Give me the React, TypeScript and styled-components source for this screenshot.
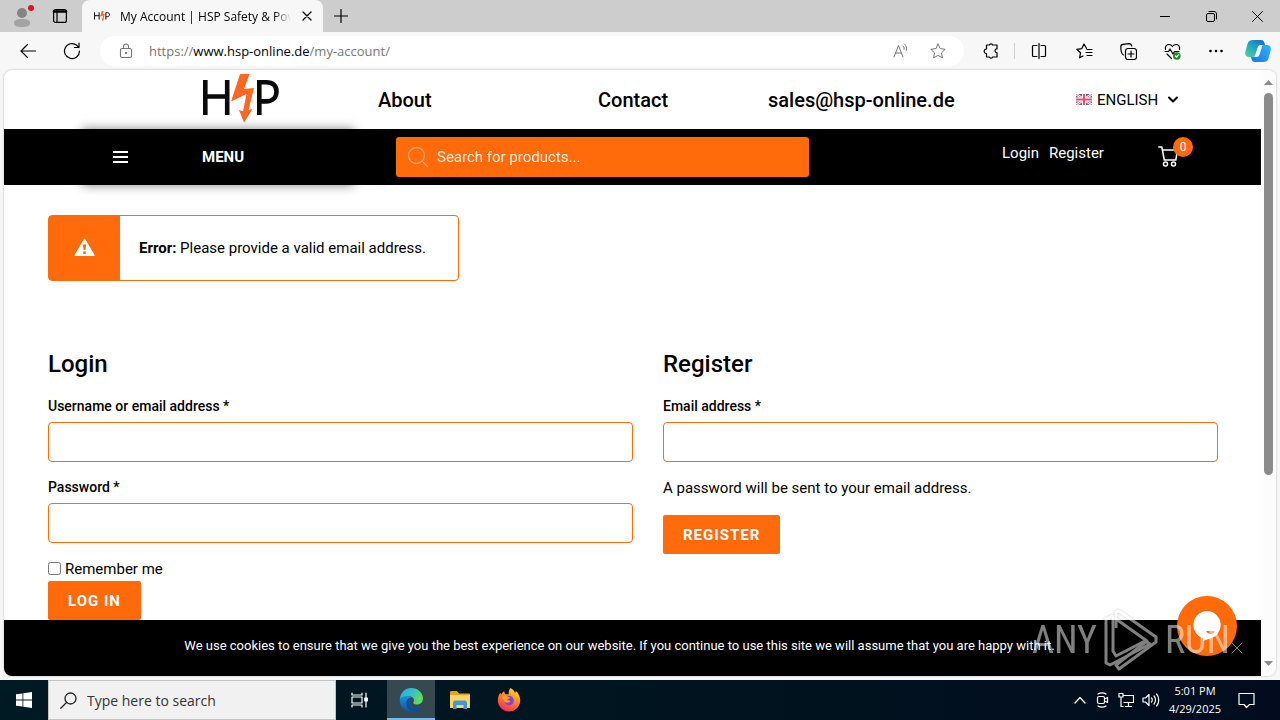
import React from "react";
import styled, { createGlobalStyle, css } from "styled-components";

const ORANGE = "#ff6a0a";
const UI_FONT = '"Open Sans", "Noto Sans", sans-serif';

const Global = createGlobalStyle`
  *, *::before, *::after { box-sizing: border-box; }
  html, body { margin: 0; padding: 0; }
  body { font-family: Roboto, "Liberation Sans", sans-serif; color: #000; background: #f7f7f7; }
  button, input { font: inherit; color: inherit; }
  button { border: 0; padding: 0; background: none; cursor: pointer; }
  a { color: inherit; text-decoration: none; }
  h2, p { margin: 0; }
  svg { display: block; flex: none; }
`;

const Desktop = styled.div`
  display: flex;
  flex-direction: column;
  height: 100vh;
  overflow: hidden;
  background: #f7f7f7;
`;

/* Browser chrome */

const TabStrip = styled.header`
  display: flex;
  flex: none;
  height: 32px;
  background: #cdcdcd;
  font-family: ${UI_FONT};
`;

const TabTools = styled.div`
  display: flex;
  align-items: center;
  gap: 17px;
  width: 82px;
  padding-left: 11px;
`;

const Tab = styled.div`
  display: flex;
  align-items: center;
  gap: 10px;
  width: 241px;
  padding: 0 10px 0 12px;
  background: #f7f7f7;
  border-radius: 8px 8px 0 0;
  font-size: 12px;
`;

const TabTitle = styled.span`
  flex: 1;
  overflow: hidden;
  white-space: nowrap;
  mask-image: linear-gradient(to right, #000 90%, transparent);
`;

const IconButton = styled.button<{ $w?: number }>`
  display: flex;
  flex: none;
  align-items: center;
  justify-content: center;
  width: ${(p) => p.$w ?? 20}px;
  height: 100%;
`;

const WindowButtons = styled.div`
  display: flex;
  margin-left: auto;
`;

const Toolbar = styled.div`
  display: flex;
  flex: none;
  align-items: center;
  height: 38px;
  padding: 0 3px 0 6px;
  font-family: ${UI_FONT};
`;

const AddressBar = styled.div`
  display: flex;
  flex: 1;
  align-items: center;
  height: 30px;
  margin-left: 6px;
  padding: 0 14px 0 18px;
  gap: 15px;
  background: #fff;
  border-radius: 15px;
  color: #767676;
  font-size: 13px;
`;

const Url = styled.span`
  flex: 1;
  white-space: nowrap;
  b { font-weight: 400; color: #000; }
`;

const Divider = styled.span`
  width: 1px;
  height: 16px;
  background: #cfcfcf;
`;

const ToolbarActions = styled.div`
  display: flex;
  align-items: center;
  height: 100%;
  padding-left: 4px;
`;

/* Web page */

const Viewport = styled.div`
  position: relative;
  display: flex;
  flex: 1;
  min-height: 0;
  margin: 0 4px 4px;
  overflow: hidden;
  background: #fff;
  border-radius: 8px;
  box-shadow: 0 0 2px rgba(0, 0, 0, 0.3);
`;

const Page = styled.div`
  flex: 1;
  min-width: 0;
  overflow: hidden;
`;

const Scrollbar = styled.div`
  display: flex;
  flex: none;
  flex-direction: column;
  align-items: center;
  width: 15px;
  padding: 10px 0 10px;
  background: #fcfcfc;
`;

const Thumb = styled.div`
  width: 9px;
  height: 382px;
  margin: 8px 0 auto;
  background: #8b8b8b;
  border-radius: 5px;
`;

const SiteHeader = styled.header`
  display: grid;
  grid-template-columns: 374fr 220fr 170fr 308fr 185fr;
  align-items: center;
  height: 59px;
`;

const LogoLink = styled.a`
  display: flex;
  justify-content: flex-end;
  padding: 0 99px 3px 0;
`;

const HeaderLink = styled.a`
  font-size: 20px;
  font-weight: 500;
  line-height: 24px;
`;

const Language = styled.button`
  display: flex;
  align-items: center;
  gap: 5px;
  font-size: 15px;
  line-height: 20px;
`;

const NavBar = styled.nav`
  position: relative;
  display: grid;
  grid-template-columns: 392fr 413fr 193fr 156fr 103fr;
  height: 56px;
  background: #000;
  color: #fff;
`;

const MenuButton = styled.button`
  display: flex;
  align-items: center;
  gap: 74px;
  margin: 0 42px 0 78px;
  padding-left: 31px;
  background: #000;
  box-shadow: 0 0 10px rgba(0, 0, 0, 0.5);
  font-size: 15px;
  font-weight: 700;
`;

const SearchBox = styled.label`
  display: flex;
  align-items: center;
  gap: 8px;
  height: 40px;
  margin-top: 8px;
  padding: 0 11px;
  background: ${ORANGE};
  border-radius: 3px;
`;

const SearchInput = styled.input`
  flex: 1;
  min-width: 0;
  padding: 0;
  border: 0;
  outline: 0;
  background: none;
  font-size: 15px;
  &::placeholder { color: #fff; opacity: 0.9; }
`;

const AccountLinks = styled.div`
  display: flex;
  grid-column: 4;
  gap: 10px;
  padding-top: 14px;
  font-size: 15px;
  line-height: 20px;
`;

const Cart = styled.a`
  position: relative;
  padding-top: 17px;
`;

const CartCount = styled.span`
  position: absolute;
  top: 8px;
  left: 15px;
  width: 20px;
  height: 20px;
  border-radius: 50%;
  background: ${ORANGE};
  font-size: 12px;
  line-height: 20px;
  text-align: center;
`;

const Content = styled.main`
  padding: 30px 43px 0 44px;
`;

const Alert = styled.div`
  display: flex;
  width: fit-content;
  height: 66px;
  border: 1px solid ${ORANGE};
  border-radius: 4px;
  font-size: 15px;
`;

const AlertIcon = styled.div`
  display: flex;
  align-items: center;
  justify-content: center;
  width: 71px;
  padding-bottom: 2px;
  background: ${ORANGE};
`;

const AlertText = styled.p`
  padding: 0 32px 0 19px;
  line-height: 64px;
  b { font-weight: 700; }
`;

const Forms = styled.div`
  display: grid;
  grid-template-columns: 585fr 555fr;
  gap: 30px;
  margin-top: 68px;
`;

const Form = styled.form`
  display: flex;
  flex-direction: column;
  align-items: flex-start;
`;

const Title = styled.h2`
  margin-bottom: 17px;
  font-size: 24px;
  font-weight: 500;
  line-height: 30px;
`;

const Field = styled.label`
  display: flex;
  flex-direction: column;
  gap: 6px;
  width: 100%;
  margin-bottom: 15px;
  font-size: 14px;
  font-weight: 500;
  line-height: 20px;
`;

const TextInput = styled.input`
  width: 100%;
  height: 40px;
  padding: 0 12px;
  border: 1px solid ${ORANGE};
  border-radius: 4px;
  background: #fff;
`;

const Remember = styled.label`
  display: flex;
  align-items: center;
  gap: 4px;
  font-size: 15px;
  line-height: 23px;
  input { width: 13px; height: 13px; margin: 0 0 3px; }
`;

const Note = styled.p`
  padding-top: 1px;
  margin-bottom: 17px;
  font-size: 15px;
  line-height: 20px;
`;

const Submit = styled.button`
  height: 39px;
  padding: 0 20px;
  border-radius: 2px;
  background: ${ORANGE};
  color: #fff;
  font-size: 15px;
  font-weight: 700;
  letter-spacing: 1px;
`;

const CookieBar = styled.div`
  position: absolute;
  right: 15px;
  bottom: 0;
  left: 0;
  display: flex;
  align-items: center;
  height: 56px;
  padding: 0 18px 0 4px;
  background: #000;
  color: #fff;
  font-size: 13px;
  p { flex: 1; padding-bottom: 5px; text-align: center; }
`;

const ChatButton = styled.button`
  position: absolute;
  right: 39px;
  bottom: 20px;
  display: flex;
  align-items: center;
  justify-content: center;
  width: 60px;
  height: 60px;
  border-radius: 50%;
  background: ${ORANGE};
`;

const Watermark = styled.div`
  position: absolute;
  right: 46px;
  bottom: 4px;
  display: flex;
  align-items: center;
  gap: 6px;
  color: #fff;
  font-family: "Roboto Condensed", "Liberation Sans Narrow", Roboto, sans-serif;
  font-size: 38px;
  line-height: 64px;
  opacity: 0.5;
  pointer-events: none;
  svg { filter: drop-shadow(0 0 1px rgba(0, 0, 0, 0.5)); }
`;

/* Taskbar */

const Taskbar = styled.footer`
  display: flex;
  flex: none;
  height: 40px;
  background: linear-gradient(to right, #001a24, #00141f 50%, #020c1e);
  color: #fff;
  font-family: ${UI_FONT};
`;

const TaskSearch = styled.label`
  display: flex;
  align-items: center;
  gap: 10px;
  width: 288px;
  padding: 0 11px;
  border: 1px solid #c4c4c4;
  background: #f1f1f1;
  color: #222;
`;

const TaskSearchInput = styled.input`
  flex: 1;
  min-width: 0;
  padding: 0;
  border: 0;
  outline: 0;
  background: none;
  font-size: 14px;
  &::placeholder { color: #333; opacity: 1; }
`;

const TaskApps = styled.div`
  display: flex;
  gap: 1px;
  padding-left: 3px;
`;

const TaskButton = styled.button<{ $active?: boolean }>`
  display: flex;
  align-items: center;
  justify-content: center;
  width: 48px;
  ${(p) =>
    p.$active &&
    css`
      background: #364850;
      border-bottom: 2px solid #76b9ed;
      padding-top: 2px;
    `}
`;

const Tray = styled.div`
  display: flex;
  align-items: center;
  gap: 8px;
  margin-left: auto;
  padding-right: 25px;
`;

const Clock = styled.time`
  width: 54px;
  margin-right: 8px;
  font-size: 11px;
  line-height: 18px;
  text-align: center;
  white-space: nowrap;
`;

/* Drawings */

type IconProps = { size?: number; w?: number; h?: number; sw?: number; color?: string; children: React.ReactNode };
const Icon = ({ size = 16, w, h, sw = 1, color = "currentColor", children }: IconProps) => (
  <svg
    width={w ?? size}
    height={h ?? size}
    viewBox={`0 0 ${w ?? size} ${h ?? size}`}
    fill="none"
    stroke={color}
    strokeWidth={sw}
    strokeLinecap="round"
    strokeLinejoin="round"
    aria-hidden="true"
  >
    {children}
  </svg>
);

const HspLogo = ({ width, height }: { width: number; height: number }) => (
  <svg width={width} height={height} viewBox="0 0 76 50" role="img" aria-label="HSP">
    <g fill="none" stroke="#0a0a0a" strokeWidth="4.6">
      <path d="M2.3 7v35M24.2 7v35M2.3 23.500H24.2" />
      <path d="M56.3 42V9.200H63c7.500 0 10.500 4 10.500 9.200 0 6-4 10-10.500 10h-6.700" />
    </g>
    <path fill="#ff6620" d="M37 1h9.500L41 16l10-1-5.500 22 4-1-8.500 13.500L36 37l4 1.300 3.500-17.300L28 28.500z" />
  </svg>
);

const Star = "M8 1l2.200 4.600 5 .7-3.700 3.500.9 5L8 12.400 3.600 14.800l.9-5L.8 6.300l5-.7z";

const Flag = () => (
  <svg width="16" height="11" viewBox="0 0 16 11" opacity="0.85" aria-hidden="true">
    <path fill="#3c4c9c" d="M0 0h16v11H0z" />
    <path stroke="#fff" strokeWidth="2.400" d="M0 0l16 11M16 0L0 11" />
    <path stroke="#e0566a" strokeWidth="1" d="M0 0l16 11M16 0L0 11" />
    <path stroke="#fff" strokeWidth="4" d="M8 0v11M0 5.500h16" />
    <path stroke="#df3348" strokeWidth="2" d="M8 0v11M0 5.500h16" />
  </svg>
);

const Copilot = () => (
  <svg width="26" height="24" viewBox="0 0 26 24" aria-hidden="true">
    <defs>
      <linearGradient id="cpA" x1="0" y1="1" x2="1" y2="0">
        <stop offset="0" stopColor="#58d68a" />
        <stop offset=".5" stopColor="#1ea5c9" />
        <stop offset="1" stopColor="#1563cf" />
      </linearGradient>
      <linearGradient id="cpB" x1="0" y1="1" x2="1" y2="0">
        <stop offset="0" stopColor="#1679e8" />
        <stop offset="1" stopColor="#2fb4f7" />
      </linearGradient>
    </defs>
    <path fill="url(#cpA)" d="M8 1h8c2 0 3 1 3.500 3l.5 2h-4c-2 0-3 1-3.500 3l-2 6c-.6 2-1.500 3-3.500 3H4c-3 0-4.500-2-3.500-6l2-7C3.300 2 5 1 8 1z" />
    <path fill="url(#cpB)" d="M18 23h-8c-2 0-3-1-3.500-3L6 18h2c2 0 3-1 3.500-3l2-6c.6-2 1.500-3 3.500-3h5c3 0 4.500 2 3.500 6l-2 7c-.8 3-2.500 4-5.500 4z" />
    <path fill="#f4fbff" d="M13 8.500c.5-1.700 1.500-2.500 3-2.500h1.500l-3 9.500c-.5 1.700-1.500 2.500-3 2.500H10z" />
  </svg>
);

const EdgeIcon = () => (
  <svg width="24" height="24" viewBox="0 0 24 24" aria-hidden="true">
    <defs>
      <linearGradient id="edA" x1="0" y1="0" x2="1" y2=".4">
        <stop offset="0" stopColor="#2aa8e0" />
        <stop offset=".55" stopColor="#35c1c9" />
        <stop offset="1" stopColor="#62dc59" />
      </linearGradient>
      <linearGradient id="edB" x1="0" y1="0" x2="0" y2="1">
        <stop offset="0" stopColor="#1b93dc" />
        <stop offset="1" stopColor="#0b54a8" />
      </linearGradient>
    </defs>
    <path fill="url(#edB)" d="M1 10c-1.500 8 4.500 14 11.500 14 4.500 0 8-2 10-5-4 2.500-11 1.500-12-4-.4-2.500 1-4 2-5C9.500 6 3 6 1 10z" />
    <path fill="#0a4f9e" d="M8 12c-2 5 1 11 6.500 11.700 3.500-.4 6.300-2 8-4.700-4 2.500-10.500 1.500-12-3.500-.4-2 .5-4 2-5.200C11 9.500 9 10 8 12z" />
    <path fill="url(#edA)" d="M.8 11C1.500 4.500 6 0 12.200 0 19 0 24 5 24 10.500c0 3.500-2.500 6-6 6-3 0-4.300-1-3.600-2.200 1.600-2.300.3-6.300-5.400-6.300C5 8 1.800 9.300.8 11z" />
  </svg>
);

const FolderIcon = () => (
  <svg width="22" height="20" viewBox="0 0 22 20" aria-hidden="true">
    <path fill="#e5a323" d="M1 2.500C1 1.500 1.500 1 2.500 1H8l2 2.500h10c.6 0 1 .4 1 1V7H1z" />
    <path fill="#fcd462" d="M1 5h20v13H1z" />
    <path fill="#3f97d3" d="M4 19v-6c0-1.500 1-2.500 2.500-2.500h9c1.500 0 2.500 1 2.500 2.500v6h-3.500v-4h-7v4z" />
  </svg>
);

const FirefoxIcon = () => (
  <svg width="24" height="24" viewBox="0 0 24 24" aria-hidden="true">
    <defs>
      <linearGradient id="ffA" x1=".8" y1="0" x2=".3" y2="1">
        <stop offset="0" stopColor="#ffe226" />
        <stop offset=".45" stopColor="#ff8a1e" />
        <stop offset="1" stopColor="#f5295c" />
      </linearGradient>
    </defs>
    <path fill="url(#ffA)" d="M13.500 0c3 1.500 4 3.500 4.500 5 .8-.5.8-1.500.7-2.300C21.500 5 23.500 9 23.200 13c-.5 6-5.200 10.500-11.200 10.500S.8 18.500.8 12.500C.8 9 2 6 3.500 4.500c.1 1 .3 1.500.7 2C5 5 6 4 7.300 3.300c0 1.200.4 2.200 1.200 3 1.500-.3 2.700 0 3.300.2C11.500 4 12 1.500 13.500 0z" />
    <circle cx="12" cy="12.500" r="4.800" fill="#7a45d8" />
    <path fill="#ff9a2b" d="M4.500 9c2-2 5-1.500 6.500-.3 1.400.2 2 .8 2 1.300-1.500.8-2.500 1-2.800 2.300 1.600-.6 3.300.7 3.300.7-2.500 3.500-7 1.500-7-1.500z" />
  </svg>
);

export default function App() {
  return (
    <Desktop>
      <Global />
      <TabStrip>
        <TabTools>
          <IconButton aria-label="Profile" $w={24}>
            <svg width="24" height="24" viewBox="0 0 24 24">
              <circle cx="11" cy="9" r="5" fill="#858585" />
              <path fill="#a3a3a3" d="M3 19c0-3 3-4 8-4s8 1 8 4-3 4-8 4-8-1-8-4z" />
              <circle cx="20" cy="4" r="3" fill="#e0141c" />
            </svg>
          </IconButton>
          <IconButton aria-label="Tab actions" $w={16}>
            <Icon size={16} sw={1.2}>
              <rect x="1.600" y="1.600" width="12.800" height="12.800" rx="2" />
              <path d="M2 3.500h12" strokeWidth="2.600" />
              <path d="M5 4v10" />
            </Icon>
          </IconButton>
        </TabTools>
        <Tab>
          <HspLogo width={16} height={14} />
          <TabTitle>My Account | HSP Safety &amp; Power</TabTitle>
          <IconButton aria-label="Close tab" $w={12}>
            <Icon size={10} sw={1.3}><path d="M1 1l8 8M9 1L1 9" /></Icon>
          </IconButton>
        </Tab>
        <IconButton aria-label="New tab" $w={36}>
          <Icon size={14} sw={1.2}><path d="M7 .5v13M.5 7h13" /></Icon>
        </IconButton>
        <WindowButtons>
          <IconButton aria-label="Minimize" $w={46}><Icon size={10}><path d="M0 5.500h10" /></Icon></IconButton>
          <IconButton aria-label="Restore" $w={46}>
            <Icon size={11}><rect x=".5" y="2.500" width="8" height="8" rx="1.500" /><path d="M3 .5h5c1.500 0 2.500 1 2.500 2.500v5" /></Icon>
          </IconButton>
          <IconButton aria-label="Close" $w={46}><Icon size={11}><path d="M.5.5l10 10M10.500.5l-10 10" /></Icon></IconButton>
        </WindowButtons>
      </TabStrip>

      <Toolbar>
        <IconButton aria-label="Back" $w={44}><Icon size={16} sw={1.2}><path d="M15.500 8H1M7.500 1.500L1 8l6.500 6.500" /></Icon></IconButton>
        <IconButton aria-label="Refresh" $w={44}>
          <Icon size={18} sw={1.2}><path d="M16.500 9a7.500 7.500 0 1 1-2.700-5.700L16 5.500M16 1v4.500h-4.500" /></Icon>
        </IconButton>
        <AddressBar>
          <Icon w={16} h={16} sw={1.1}>
            <rect x="2.500" y="5.500" width="11" height="9" rx="1.500" /><path d="M5.500 5.500V3.500a2.500 2.500 0 0 1 5 0v2" /><circle cx="8" cy="10" r=".6" fill="currentColor" />
          </Icon>
          <Url>https://<b>www.hsp-online.de</b>/my-account/</Url>
          <IconButton aria-label="Read aloud" $w={20}>
            <Icon size={16}><path d="M1 14L5.500 2.500 10 14M2.500 10h6M10 3c1 .8 1.300 2 1 3.500M11.500 1c2 1.500 2.500 4 1.800 6.500" /></Icon>
          </IconButton>
          <IconButton aria-label="Add to favorites" $w={24}><Icon size={16}><path d={Star} /></Icon></IconButton>
        </AddressBar>
        <ToolbarActions>
          <IconButton aria-label="Extensions" $w={46}>
            <Icon size={16} sw={1.2}><path d="M3.500 2h3c0-1.600 3-1.600 3 0H14v4c-2.600-.4-2.600 4 0 3.500V14H9.500c0 1.600-3 1.600-3 0h-3v-3.500C.4 10.700.4 6 3.500 6z" /></Icon>
          </IconButton>
          <Divider />
          <IconButton aria-label="Split screen" $w={48}>
            <Icon size={16} sw={1.2}><path d="M6 2.500H2.500q-1 0-1 1v9q0 1 1 1H6M10 2.500h3.500q1 0 1 1v9q0 1-1 1H10M8 .5v15" /></Icon>
          </IconButton>
          <IconButton aria-label="Favorites" $w={42}>
            <Icon size={17} sw={1.2}><path d="M10.500 5.500L8 1 5.800 5.600l-5 .7 3.700 3.500-.9 5L7 13M11 6.500h5M10 9.500h6M11 12.500h5" /></Icon>
          </IconButton>
          <IconButton aria-label="Collections" $w={46}>
            <Icon size={17} sw={1.2}><rect x="5.500" y="5.500" width="11" height="11" rx="2.500" /><path d="M11 8v6M8 11h6M3.500 12C2 11.500 1.500 10 1 7L.8 4C.7 2.500 1.500 1.500 3 1.300L9 .7c1.500 0 2.500 1 2.800 2.500" /></Icon>
          </IconButton>
          <IconButton aria-label="Browser essentials" $w={42}>
            <Icon size={17} sw={1.2}><path d="M1.500 6.500C.8 3 3 1.500 5 1.500c1.700 0 2.700.8 3.500 2 .8-1.200 1.800-2 3.500-2 2 0 4.200 1.500 3.500 5M1 8.500h3.500L6 6l3 5 1.500-2.500H15M3 11l4.500 4.500" /><circle cx="12.800" cy="13" r="3.800" fill="#1e8a1e" stroke="none" /><path stroke="#fff" d="M11.500 13l1 1 2-2.200" /></Icon>
          </IconButton>
          <IconButton aria-label="Settings and more" $w={46}>
            <Icon w={14} h={4}><g fill="currentColor" stroke="none"><circle cx="1.500" cy="2" r="1.300" /><circle cx="7" cy="2" r="1.300" /><circle cx="12.500" cy="2" r="1.300" /></g></Icon>
          </IconButton>
          <IconButton aria-label="Copilot" $w={38}><Copilot /></IconButton>
        </ToolbarActions>
      </Toolbar>

      <Viewport>
        <Page>
          <SiteHeader>
            <LogoLink href="#home"><HspLogo width={76} height={50} /></LogoLink>
            <HeaderLink href="#about">About</HeaderLink>
            <HeaderLink href="#contact">Contact</HeaderLink>
            <HeaderLink href="mailto:sales@hsp-online.de">sales@hsp-online.de</HeaderLink>
            <Language>
              <Flag />
              ENGLISH
              <Icon w={18} h={8} sw={2}><path d="M6 1.500l4 4 4-4" /></Icon>
            </Language>
          </SiteHeader>
          <NavBar>
            <MenuButton>
              <Icon w={15} h={12} sw={2}><path strokeLinecap="butt" d="M0 1h15M0 6h15M0 11h15" /></Icon>
              MENU
            </MenuButton>
            <SearchBox>
              <Icon size={22} sw={1.3} color="#ffa768"><circle cx="9.500" cy="9.500" r="8" /><path d="M15.500 15.500l5 5" /></Icon>
              <SearchInput type="search" placeholder="Search for products..." aria-label="Search for products" />
            </SearchBox>
            <AccountLinks>
              <a href="#login">Login</a>
              <a href="#register">Register</a>
            </AccountLinks>
            <Cart href="#cart" aria-label="Cart">
              <Icon w={20} h={21} sw={1.5}><path d="M.8 1h3l2.500 13h11.500L19.500 4H4.500" /><circle cx="7.500" cy="18" r="2" /><circle cx="15.500" cy="18" r="2" /></Icon>
              <CartCount>0</CartCount>
            </Cart>
          </NavBar>
          <Content>
            <Alert role="alert">
              <AlertIcon>
                <svg width="21" height="18" viewBox="0 0 21 18" aria-hidden="true">
                  <path fill="#fff" stroke="#fff" strokeLinejoin="round" d="M10.500 .8L20.300 17.500H.7z" />
                  <path fill={ORANGE} d="M8.800 6.500h3.400l-.8 5.500H9.600zM9.200 13.500h2.600V16H9.200z" />
                </svg>
              </AlertIcon>
              <AlertText><b>Error:</b> Please provide a valid email address.</AlertText>
            </Alert>
            <Forms>
              <Form>
                <Title>Login</Title>
                <Field>Username or email address *<TextInput type="text" /></Field>
                <Field>Password *<TextInput type="password" /></Field>
                <Remember><input type="checkbox" />Remember me</Remember>
                <Submit type="button">LOG IN</Submit>
              </Form>
              <Form>
                <Title>Register</Title>
                <Field>Email address *<TextInput type="email" /></Field>
                <Note>A password will be sent to your email address.</Note>
                <Submit type="button">REGISTER</Submit>
              </Form>
            </Forms>
          </Content>
        </Page>
        <Scrollbar>
          <Icon w={9} h={5}><path fill="#8b8b8b" stroke="none" d="M0 5L4.500 0 9 5z" /></Icon>
          <Thumb />
          <Icon w={9} h={5}><path fill="#8b8b8b" stroke="none" d="M0 0h9L4.500 5z" /></Icon>
        </Scrollbar>
        <CookieBar>
          <p>We use cookies to ensure that we give you the best experience on our website. If you continue to use this site we will assume that you are happy with it.</p>
          <IconButton aria-label="Dismiss" $w={12}><Icon size={12} color="#888"><path d="M1 1l10 10M11 1L1 11" /></Icon></IconButton>
        </CookieBar>
        <ChatButton aria-label="Chat">
          <svg width="28" height="30" viewBox="0 0 28 30" aria-hidden="true">
            <path fill="#fff" d="M14 0a14 14 0 0 1 3 27.600L10 30v-2.700A14 14 0 0 1 14 0z" />
            <path fill={ORANGE} d="M13 20h9c-1 2-3 3-4.500 3S14 22 13 20z" />
          </svg>
        </ChatButton>
        <Watermark>
          ANY
          <svg width="56" height="64" viewBox="0 0 56 64" fill="none" stroke="#fff" strokeWidth="3" strokeLinejoin="round" aria-hidden="true">
            <path d="M10 43V8l-7 3v44l4 2 40-21-5-3-29 15z" />
            <path d="M13 20V4l3-1 37 26v5L16 61l-3-4 31-24-31-22" />
          </svg>
          RUN
        </Watermark>
      </Viewport>

      <Taskbar>
        <TaskButton aria-label="Start">
          <svg width="16" height="16" viewBox="0 0 16 16" fill="#fff"><path d="M0 2.300L6.500 1.400v6.200H0zM7.300 1.300L16 0v7.600H7.300zM0 8.400h6.500v6.200L0 13.700zM7.300 8.400H16V16l-8.700-1.300z" /></svg>
        </TaskButton>
        <TaskSearch>
          <Icon size={17} sw={1.3}><circle cx="10.500" cy="6.500" r="5.500" /><path d="M6.500 10.500L.8 16.200" /></Icon>
          <TaskSearchInput type="search" placeholder="Type here to search" aria-label="Type here to search" />
        </TaskSearch>
        <TaskButton aria-label="Task view">
          <Icon w={18} h={16} sw={1.2}><path d="M1 1v2h10V1M1 15v-2h10v2M1 5h10v6H1zM15 1v14" /><path fill="currentColor" d="M13.800 6h2.500v3h-2.500z" /></Icon>
        </TaskButton>
        <TaskApps>
          <TaskButton aria-label="Microsoft Edge" $active><EdgeIcon /></TaskButton>
          <TaskButton aria-label="File Explorer"><FolderIcon /></TaskButton>
          <TaskButton aria-label="Firefox"><FirefoxIcon /></TaskButton>
        </TaskApps>
        <Tray>
          <Icon w={12} h={8} sw={1.2}><path d="M1 7l5-5.500L11 7" /></Icon>
          <Icon size={16} sw={1.2}><rect x="3.500" y="4.500" width="7" height="7" rx="1.500" /><path d="M10.500 7l3-1.500v5l-3-1.500M4 2c2.500-1.500 5.500-1.500 8 0M4 14c2.500 1.500 5.500 1.500 8 0" /></Icon>
          <Icon size={16} sw={1.2}><path d="M5 3.500h10.500v7H6M7.500 14.500h6M10.500 10.500v4M1 1.500h4v3.500H1zM3 5v9.500h2" /></Icon>
          <Icon w={18} h={16} sw={1.2}><path d="M1 6v4h2.500L7 13.500v-11L3.500 6zM9.500 6c1 1 1 3 0 4M12 4c2 2 2 6 0 8M14.500 2c3 3 3 9 0 12" /></Icon>
          <Clock>5:01 PM<br />4/29/2025</Clock>
          <Icon size={17} sw={1.2}><path d="M1 1.500h15v11h-4.500L8.500 15.500 6 12.500H1z" /></Icon>
        </Tray>
      </Taskbar>
    </Desktop>
  );
}
